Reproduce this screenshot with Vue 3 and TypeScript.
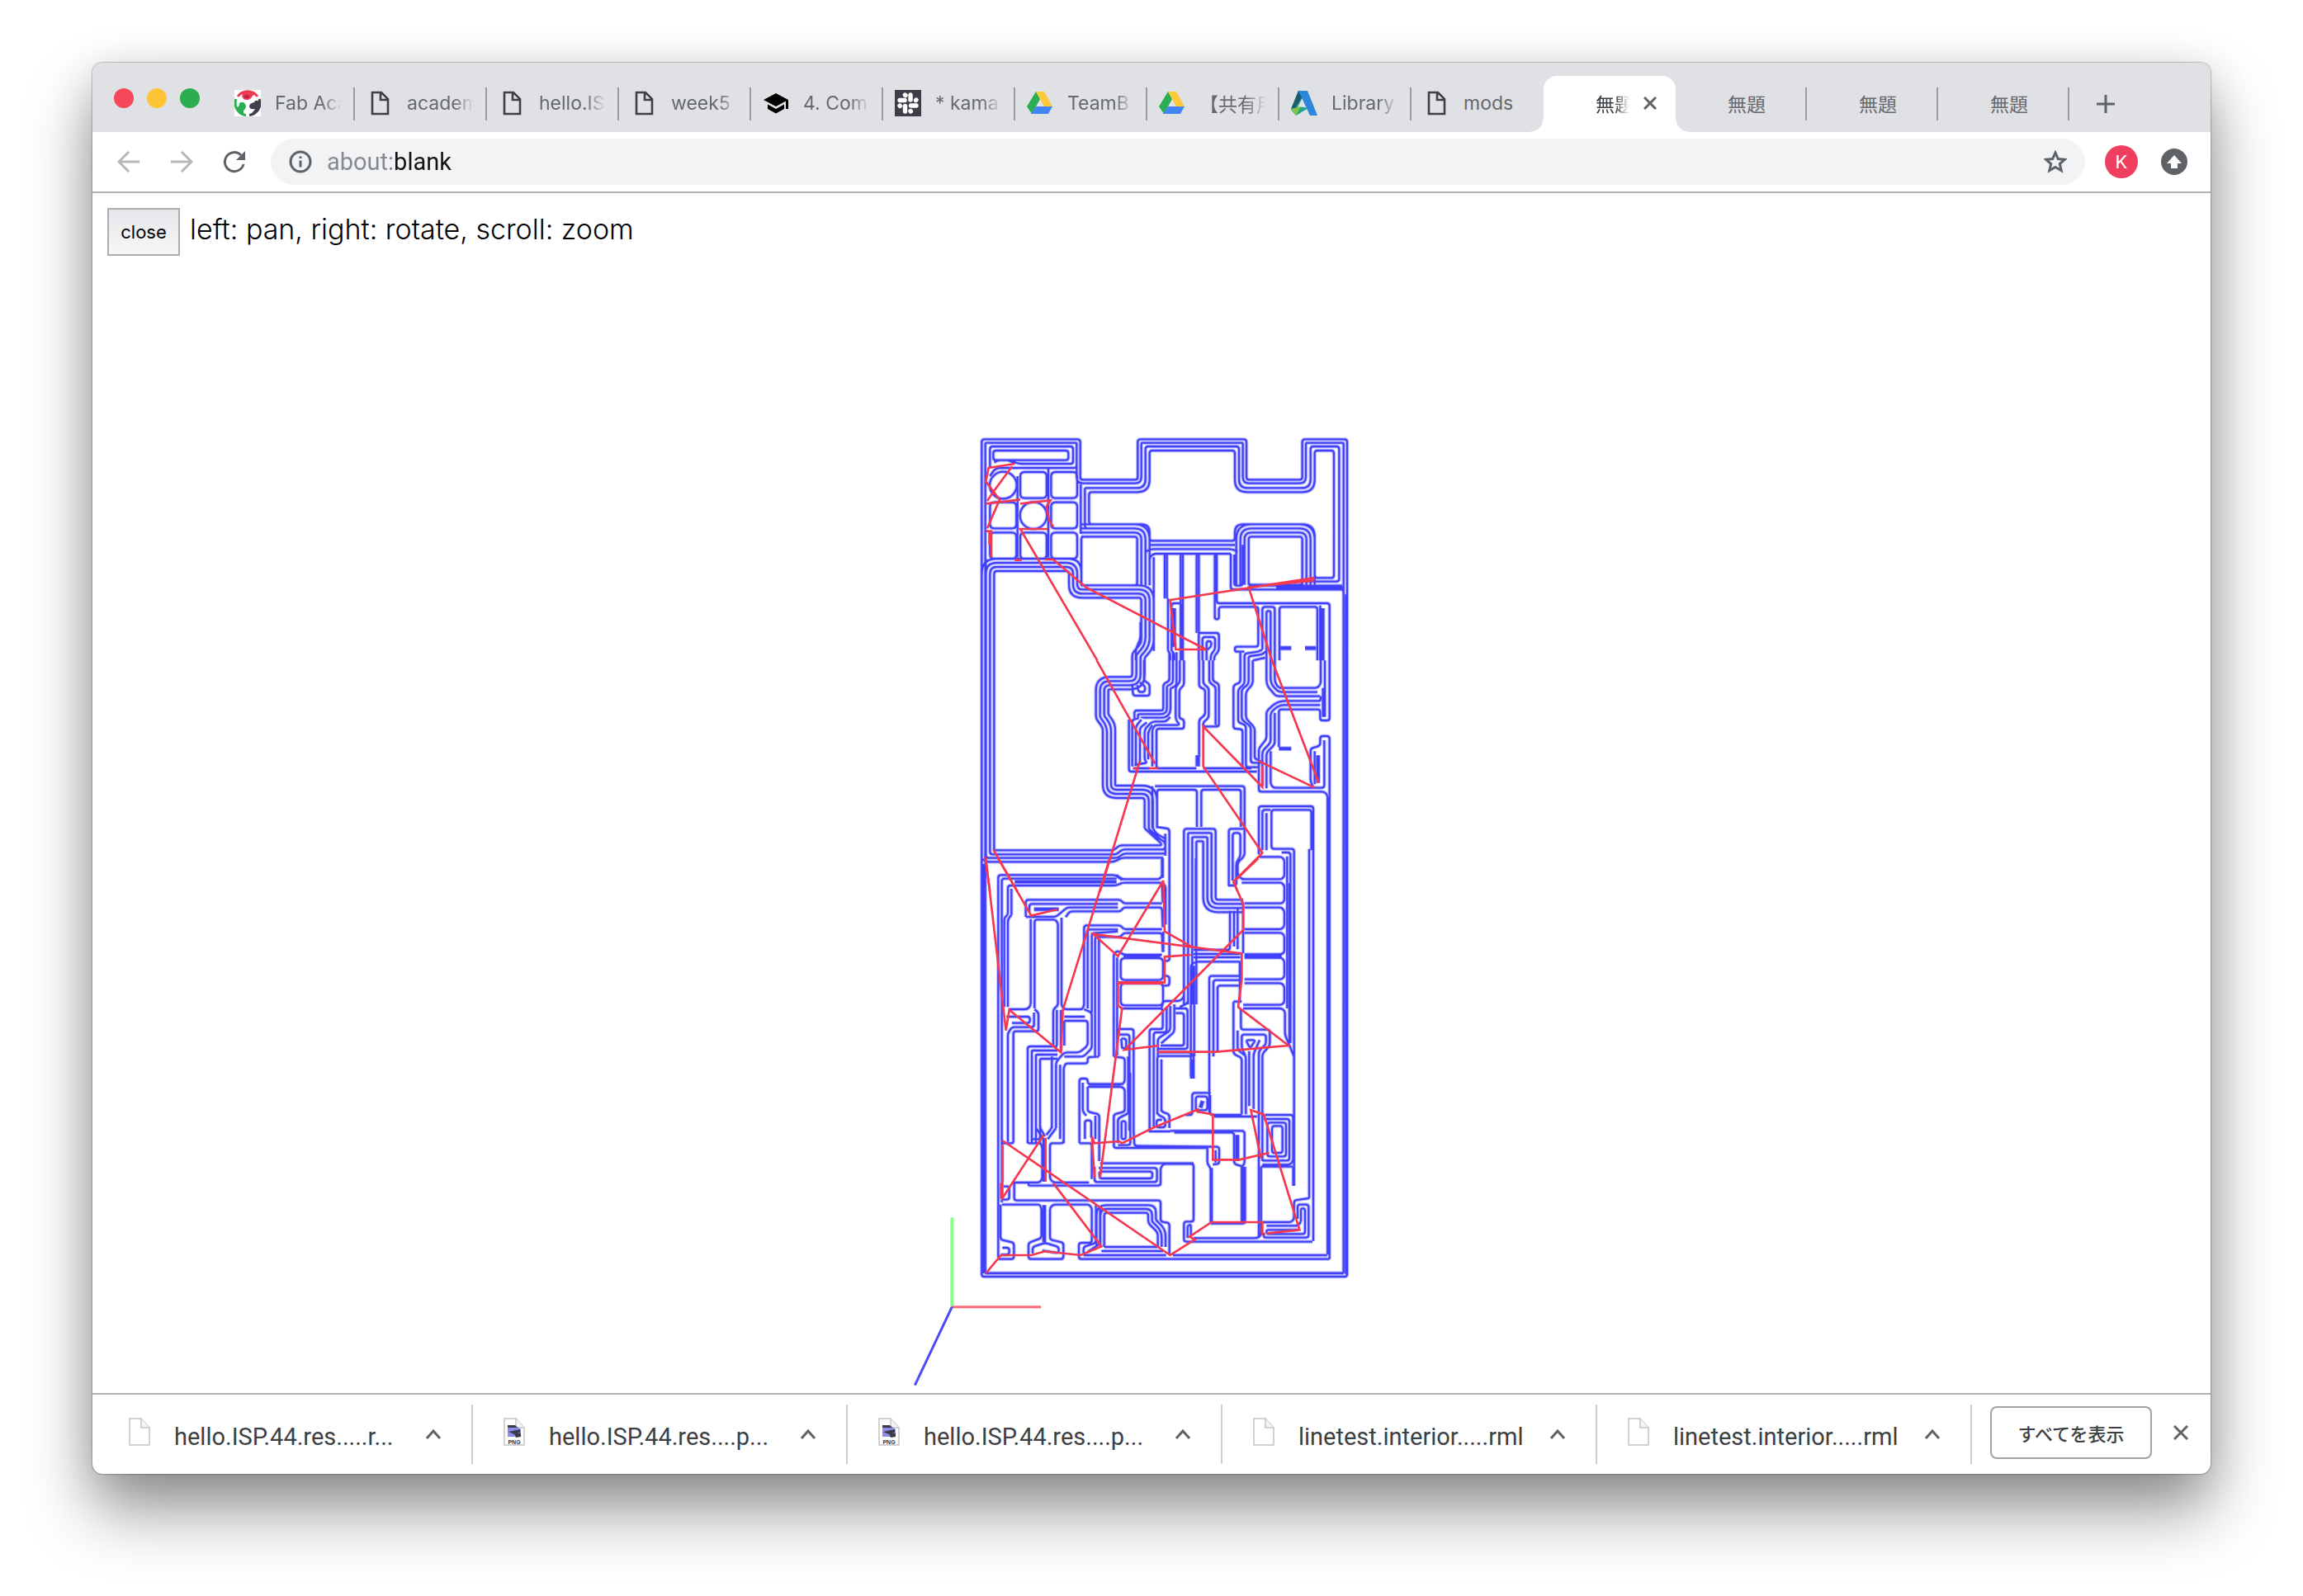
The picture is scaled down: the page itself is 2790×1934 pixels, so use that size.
<script setup lang="ts">
import { ref } from 'vue'

type Trace = [points: string, count?: number, step?: number, closed?: boolean]

interface Tab {
  title: string
  icon: string
}

interface Download {
  name: string
  png: boolean
}

const address = ref('about:blank')

const tabs: Tab[] = [
  { title: 'Fab Aca', icon: 'fab' },
  { title: 'academ', icon: 'page' },
  { title: 'hello.IS', icon: 'page' },
  { title: 'week5', icon: 'page' },
  { title: '4. Com', icon: 'cap' },
  { title: '* kama', icon: 'slack' },
  { title: 'TeamB', icon: 'drive' },
  { title: '【共有用', icon: 'drive' },
  { title: 'Library', icon: 'autodesk' },
  { title: 'mods', icon: 'page' },
  { title: '無題', icon: 'active' },
  { title: '無題', icon: 'none' },
  { title: '無題', icon: 'none' },
  { title: '無題', icon: 'none' },
]

const downloads: Download[] = [
  { name: 'hello.ISP.44.res.....r...', png: false },
  { name: 'hello.ISP.44.res....p...', png: true },
  { name: 'hello.ISP.44.res....p...', png: true },
  { name: 'linetest.interior.....rml', png: false },
  { name: 'linetest.interior.....rml', png: false },
]

/* Parallel tool paths: every point list is repeated `count` times, each pass
   shifted by `step` to the right of the travel direction. A third number on a
   point sets its corner radius. */
function shifted(points: number[][], d: number, closed: boolean): string {
  const n = points.length
  const out: { x: number; y: number; r: number }[] = []
  for (let i = 0; i < n; i++) {
    const p = points[i]
    const a = i > 0 ? points[i - 1] : closed ? points[n - 1] : null
    const b = i < n - 1 ? points[i + 1] : closed ? points[0] : null
    const u = a ? unit(a, p) : unit(p, b as number[])
    const v = b ? unit(p, b) : u
    const dot = 1 + u[0] * v[0] + u[1] * v[1]
    const k = dot < 0.2 ? 0 : d / dot
    const turn = u[0] * v[1] - u[1] * v[0]
    const r = Math.max(5, (p[2] ?? 10) - d * Math.sign(turn))
    out.push({ x: p[0] - (u[1] + v[1]) * k, y: p[1] + (u[0] + v[0]) * k, r })
  }
  let s = ''
  for (let i = 0; i < n; i++) {
    const p = out[i]
    const a = i > 0 ? out[i - 1] : closed ? out[n - 1] : null
    const b = i < n - 1 ? out[i + 1] : closed ? out[0] : null
    if (!a || !b) {
      s += `${i ? 'L' : 'M'}${p.x} ${p.y}`
      continue
    }
    const la = Math.hypot(p.x - a.x, p.y - a.y) || 1
    const lb = Math.hypot(p.x - b.x, p.y - b.y) || 1
    const r = Math.min(p.r, la / 2, lb / 2)
    s += `${i ? 'L' : 'M'}${p.x + ((a.x - p.x) * r) / la} ${p.y + ((a.y - p.y) * r) / la}`
    s += `Q${p.x} ${p.y} ${p.x + ((b.x - p.x) * r) / lb} ${p.y + ((b.y - p.y) * r) / lb}`
  }
  return closed ? s + 'Z' : s
}

function unit(a: number[], b: number[]): [number, number] {
  const l = Math.hypot(b[0] - a[0], b[1] - a[1]) || 1
  return [(b[0] - a[0]) / l, (b[1] - a[1]) / l]
}

function toPath(traces: Trace[], top: number): string {
  return traces
    .map(([text, count = 1, step = 15, closed = false]) => {
      const points = text.split(' ').map((p) => {
        const [x, y, r] = p.split(',').map(Number)
        return r === undefined ? [x, y + top] : [x, y + top, r]
      })
      return Array.from({ length: count }, (_, i) => shifted(points, i * step, closed)).join('')
    })
    .join('')
}

function box(x: number, y: number, w: number, h: number): Trace {
  return [`${x},${y},16 ${x + w},${y},16 ${x + w},${y + h},16 ${x},${y + h},16`, 1, 15, true]
}

const connector: Trace[] = [
  ['30,3080 30,36 388,36 388,183 597,183 597,36 992,36 992,183 1195,183 1195,36 1358,36 1358,3080', 2, 13, true],
  ['420,228 640,228,45 640,77 950,77 950,228,45 1240,228,45 1240,77 1310,77 1310,540 1240,540 1240,345,45 950,345,45 950,405 640,405 640,345,45 420,345', 1, 15, true],
  ['405,213 625,213,32 625,62 965,62 965,213,32 1225,213,32 1225,62 1329,62 1329,553 1210,553', 1],
  ['405,213 405,360 590,360', 1],
  ['45,470 45,1520'],
  ['60,140 60,62 362,62 362,125 165,125 140,115'],
  ['72,77 345,77 345,112 72,112', 1, 15, true],
  ['60,170,30 80,140,20 270,140 375,140 375,50'],
  ['75,120 90,112 130,112 150,125'],
  ['160,170 160,360 160,465'], ['272,140 272,465'],
  box(170, 155, 96, 95), box(282, 155, 95, 95),
  box(60, 265, 96, 95), box(282, 265, 95, 95),
  box(60, 375, 96, 95), box(170, 375, 96, 95), box(282, 375, 95, 95),
  ['390,190 390,380'],
  ['75,1530 75,515 347,515 347,612,50 610,612 610,775 577,815 577,900 445,900,50 445,1050 470,1085 470,1340,50 622,1340 622,1450', 4, -15],
  ['622,1450 682,1505 682,1512 530,1512 510,1530 75,1530'],
  ['637,1450 650,1475 697,1500 697,1527 540,1527 520,1545 60,1545 60,1500'],
  ['652,1450 665,1470 700,1490'], ['697,1542 545,1542 525,1558 45,1558 45,1500'],
  ['690,1557 540,1557 510,1572 45,1572 30,1560'],
  ['392,390 595,390 595,567', 4, -15],
  ['392,567 392,390 595,390 595,567', 1, 15, true],
  ['1195,565 1195,390 1000,390 1000,565', 4, 15],
  ['1000,390 1195,390 1195,565 1000,565', 1, 15, true],
  ['640,420 950,420'],
  ['625,445 645,435 940,435 960,445'],
  ['640,560 640,465 655,452 935,452'],
  ['655,805 655,465'],
  ['703,455 703,615', 2, 8], ['761,455 761,840', 2, 8], ['819,455 819,740', 2, 8],
  ['877,455 877,690 892,690 892,645 1035,645 1035,790 950,790 950,808 985,808'],
  ['884,455 884,632 1294,632 1294,1055'],
  ['935,452 935,582 1345,582 1345,3066'],
  ['1353,600 1353,3070'],
  ['948,455 948,568 978,568 978,420'],
  ['1000,568 1340,568'], ['1100,575 1345,575'],
  ['707,615 707,805'], ['720,805 720,632 755,632 755,840'], ['732,650 732,790', 2, 7],
  ['819,740 892,740 892,805 875,825 875,840'],
  ['832,840 832,755 878,755 878,800 862,820 862,840'],
  ['819,740 819,840'],
  ['847,840 847,770 864,770 864,790 850,800'],
  ['1050,800 1050,645 1095,645 1095,840'],
  ['1065,840 1065,660 1080,660 1080,840'],
  ['1112,840 1112,645 1250,645 1250,840'],
  ['1272,650 1272,840', 2, 7], ['1260,640 1260,840'],
  ['1115,792 1155,792', 2, 6], ['1205,792 1245,792', 2, 6],
  ['985,840 985,815 1035,808 1050,800'], ['1000,840 1000,825 1050,818 1065,805'], ['970,840 970,808'],
  ['1015,840 1060,830'],
  ['607,700 607,760 590,800 590,840'], ['707,805 715,815 715,840'], ['720,805 730,815 730,840'],
]

const middle: Trace[] = [
  ['577,85 580,128 640,128 640,85 620,75 620,0'],
  ['595,90 600,115 622,115 625,95 605,80'],
  ['585,210 585,182 690,182 690,85 712,75 712,-30', 3, 13],
  ['765,0 765,90 748,105 748,210 765,215 765,248 665,248 665,392 810,392'],
  ['750,0 750,80 735,95 735,215 750,235 660,235 650,250 650,385'],
  ['565,215 565,404 1030,404'],
  ['577,385 577,215 600,210'], ['590,380 590,240 610,215'], ['605,372 605,245 630,225'],
  ['585,380 630,372 622,360 622,250 650,222 700,222 715,205'],
  ['635,360 635,260 650,235'], ['580,392 640,392'],
  ['820,0 820,96 842,105 842,198 820,215 820,350'],
  ['835,0 835,85 855,100 855,208 835,225 835,240 892,240 892,85 870,75 870,0'],
  ['857,0 857,80 880,95 880,235'],
  ['819,345 819,385', 2, 8], ['812,345 812,380'], ['835,392 1010,392'],
  ['970,0 970,80 945,90 945,248 978,250 978,390'],
  ['985,0 985,85 962,105 962,225 990,235 990,388 1035,388'],
  ['1000,0 1000,85 975,105 975,215 1008,240 1008,372 1045,372'],
  ['1015,0 1015,85 990,115 990,210 1022,245 1022,358 1045,365'],
  ['1065,0 1065,90,20 1100,130 1260,130'], ['1080,0 1080,85,20 1110,115 1250,115'],
  ['1095,0 1095,80,20 1110,100 1250,100 1262,85 1262,0'],
  ['1277,0 1277,205', 1], ['1270,100 1270,205'],
  ['1294,0 1294,218 1260,218 1260,178 1110,178 1110,315'],
  ['1262,130 1262,147 1105,147,30 1065,185 1065,285 1037,320 1037,477 1275,477 1287,490 1287,2160'],
  ['1260,162 1110,162,20 1080,190 1080,298 1050,330 1050,455'],
  ['1095,190 1095,305 1065,335 1065,465'],
  ['1110,318 1155,318', 2, 5],
  ['1294,2176 1294,275 1260,275 1260,310 1225,320 1225,440 1235,462'],
  ['1080,330 1080,450 1090,463 1275,463 1275,290'],
  ['1240,330 1240,450'], ['1255,345 1255,445', 2, 6],
  ['1037,705 1037,530 1235,530 1235,2110'],
  ['1050,690 1050,543 1080,543'], ['1065,690 1065,555'],
  ['1228,690 1228,543 1083,543 1083,685 1165,685 1165,1910'],
  ['1220,1950 1220,685'],
  ['1152,1390 1152,698 1120,698'], ['1140,1265 1140,712'],
  ['1040,714 1120,714 1130,725 1130,785 1120,795 975,795 960,780 960,735 985,710 985,457 660,457'],
  ['667,605 667,470 812,470 812,605'], ['828,605 828,470 972,470 972,605'],
  ['650,457 650,610'],
  ['765,1250 765,612 880,612 880,870,10 980,870', 4, 15],
  ['928,818 928,612 985,612'], ['942,800 942,627 970,627 970,712 955,735 955,818 925,818'],
  ['685,720 685,785 675,795 540,795 520,780'],
  ['635,610 680,650'], ['667,605 712,612 712,1090'], ['697,630 697,710'],
]

const lower: Trace[] = [
  ['36,20 36,1500'],
  ['90,1450 90,60 515,60 540,78'], ['103,1250 103,73 520,73'],
  ['150,82 520,82', 2, 5],
  ['112,540 112,215 125,205 125,98 520,98 540,88 685,88 688,160'],
  ['138,205 138,110', 1], ['125,540 125,220 138,205'],
  ['190,212 190,150 535,150 545,163 685,163'], ['203,195 203,165 525,165'],
  ['190,212 300,212 340,178 525,178'], ['335,213 350,192 535,192 545,178 685,178 688,250'],
  ['220,182 310,182', 2, 5],
  ['208,220 208,535 195,548 130,548'], ['222,545 222,222 298,222 307,235 307,535 290,548 290,680'],
  ['320,215 320,535 330,548 395,548 402,535 402,243 535,243 545,257 685,257'],
  ['415,545 415,258 525,258'], ['430,560 430,272 525,265'], ['442,720 442,285 535,285 545,271 685,271 688,340'],
  ['456,720 456,290'], ['402,548 430,560 430,690 400,720 330,720'],
  ['120,575 205,575 205,598 140,598'], ['222,548 236,560 236,628 145,628 145,1030'],
  ['220,560 220,613 140,613 125,635 125,1030'],
  ['197,1035 197,683 305,683', 4, 15],
  ['303,550 303,680'], ['318,550 318,700'],
  ['330,590 415,590 415,680 385,705 330,705 300,740 300,980'],
  ['330,590 330,680'], ['330,575 405,575'],
  ['456,720 415,722 415,745 335,745 328,760 328,1035'], ['285,720 285,980'], ['315,750 315,1020'],
  ['688,0 688,70'], ['688,90 698,100 698,240'],
  ['510,720 510,345 525,335 545,350 685,350'], ['690,265 690,340'],
  ['522,715 522,360'],
  ['545,355 680,355'],
  box(535, 362, 154, 80), box(535, 454, 154, 80),
  ['712,370 690,375'], ['690,425 712,428 712,462 690,462'],
  ['765,300 765,505 750,518 690,518 683,545'], ['780,320 780,525 750,540'],
  ['795,0 795,340', 1], ['808,0 808,330'],
  ['790,790 790,385 810,375 970,375'], ['800,347 970,347', 2, 12],
  ['802,720 802,390'],
  ['857,930 857,427 965,427'], ['872,720 872,442 965,442'], ['887,700 887,462 965,462'],
  ['535,545 688,545 688,620 640,620 640,990'], ['702,540 702,632 655,632 655,970'],
  ['715,535 715,625 670,655 670,720'], ['730,530 730,630 682,672'],
  ['735,562 765,562 765,680 680,680'], ['670,692 778,692 778,545 730,545'], ['670,705 790,705 800,720 800,800'],
  ['668,930 668,718 790,718'], ['683,920 683,730'],
  ['932,190 932,332 800,332'], ['947,190 947,320'], ['960,180 960,330'],
  ['975,150 980,170 980,345'],
  ['945,520 945,710 975,725 975,930'], ['945,520 975,520'], ['960,625 960,695 985,715'],
  ['972,545 972,622 1077,622 1077,680 1050,710 1050,930'],
  ['990,930 990,720 975,690 975,640 1063,640 1063,675 1037,700 1037,950'],
  ['990,660 1025,660 1005,690', 1, 15, true], ['1002,900 1002,700'], ['1018,910 1018,710 1040,660'],
  ['975,75 1120,75'], ['975,88 1120,88 1130,98 1130,155 1120,163 985,163'],
  ['985,178 1120,178 1130,190 1130,245 1120,257 985,257'],
  ['985,270 1120,270 1130,280 1130,340 1120,348 985,348'],
  ['985,355 1120,355'],
  ['985,361 1120,361 1130,372 1130,430 1120,439 985,439'],
  ['985,453 1120,453 1130,465 1130,522 1120,532 980,532'],
  ['980,545 1120,545 1132,555 1132,640 1165,720'],
  ['1148,90 1148,670'], ['968,375 968,520'],
  ['525,635 525,620 582,620 582,1000'], ['525,640 567,640 567,990'], ['537,655 555,655 555,690 540,690 537,655'],
  ['510,720 550,725 550,810 540,822 420,822'], ['562,720 562,930'],
  ['797,730 797,800', 2, 6],
]

const bottom: Trace[] = [
  ['385,255 385,20 415,20 415,40 545,40'], ['397,35 397,140 410,155'],
  ['415,50 540,50 550,60 550,140 510,150 510,272 850,272'], ['415,50 415,140 457,150 457,320'],
  ['405,240 405,172 428,172 428,235'], ['443,155 443,240'], ['385,255 430,255 430,385'],
  ['525,255 525,165 565,145'], ['538,175 553,175 553,240 538,240', 1, 15, true],
  ['582,210 585,265 893,268 893,330 870,332'], ['570,0 570,262 525,262'],
  ['197,240 197,255 245,255 250,270 250,385 240,398 140,398'], ['242,180 242,200 260,230'], ['227,200 255,240'], ['212,240 245,240'],
  ['328,240 326,255 278,255 278,385 290,398 420,398'], ['285,180 285,200 265,225'], ['300,200 270,240'],
  ['145,240 145,255 100,255'], ['260,240 260,395', 2, 6], ['105,265 105,395'],
  ['200,398 200,409 680,409 680,345 690,330 800,330 800,540 765,540 765,613 1232,613'],
  ['440,340 440,396 667,396 667,345 455,345'], ['458,358 650,358 650,383 458,383 458,358'], ['460,328 800,328'],
  ['110,412 130,412 130,460 100,460'], ['148,400 148,463 680,463 680,540 712,545 712,660'],
  ['103,478 240,478 247,490 247,600 200,617 200,676 327,676 327,617 278,605 278,490 290,478 420,478 430,490 430,617 383,617 383,676 1294,676'],
  ['98,478 98,605 147,617 147,676 90,676'], ['105,635 130,635 130,660 100,660'],
  ['215,655 215,632 260,617 310,632 310,655 250,645'], ['260,480 260,615', 2, 6],
  ['445,480 445,617 400,632 400,655'], ['460,490 460,620 415,650'],
  ['475,632 475,508 635,508 635,545 670,580 670,632', 3, -14],
  ['475,632 670,632'], ['465,647 690,647'],
  ['400,662 700,662'], ['725,662 1285,662'],
  ['778,600 778,555 790,550 790,590'], ['800,600 1030,600 1045,590 1045,340'],
  ['640,210 640,212 715,212'], ['712,200 712,150 683,140 683,0'],
  ['655,180 655,195'], ['668,130 668,150 697,165 697,197 665,197 665,170 685,170'],
  ['715,210 985,210 985,330 975,340'], ['730,216 947,216 947,330 980,340'],
  ['862,547 862,345 850,330 850,270'], ['862,547 987,547 987,340'], ['975,340 975,540'], ['980,340 980,545'],
  ['866,345 866,540'],
  ['962,225 962,320', 2, 7], ['880,280 880,325'],
  ['770,152 795,152 795,72 862,72'], ['808,135 808,85 850,85 850,135', 1, 15, true],
  ['860,80 860,152 975,152'], ['822,125 830,100', 2, 6], ['875,158 1030,158'],
  ['1037,150 1037,600'], ['1050,150 1050,320'],
  ['1060,152 1162,152 1162,320 1150,333 1050,333'], ['1055,167 1148,167 1148,318 1050,318'],
  ['1068,180 1136,180 1136,303 1068,303', 1, 15, true], ['1085,192 1123,192 1123,290 1085,290', 1, 15, true],
  ['1045,340 1160,340', 1], ['1162,340 1162,410'],
  ['1220,445 1220,455 1165,463 1165,530 1155,542 1050,542'],
  ['1178,530 1178,478 1218,478 1218,598 1055,598 1055,580'],
  ['1190,540 1190,492 1205,492 1205,585 1065,585 1065,570 1180,570'], ['1065,555 1180,555 1190,540'],
  ['42,728 1345,728'], ['36,0 36,728'],
]

const cutPath =
  toPath(connector, 0) + toPath(middle, 840) + toPath(lower, 1560) + toPath(bottom, 2340) +
  'M59 203a49 49 0 1 0 98 0a49 49 0 1 0 -98 0ZM169 313a49 49 0 1 0 98 0a49 49 0 1 0 -98 0Z'

const jumps = [
  {
    shift: 0,
    path: 'M150 125L55 140L45 190L95 255L50 360M140 135L70 230L50 260M45 270L170 255M45 370L65 370V465M58 370V420M170 270L280 258L265 280L275 330L290 355M270 362H170L450 840M150 475H175M260 473H290L410 575L845 800H735L715 620L1235 540V550L1000 574L1085 840',
  },
  {
    shift: 840,
    path: 'M448 0L660 375M635 392H672M580 392H595M1085 0L1255 445M1240 462L1035 365M1050 385V460L835 240V385L1050 700L945 805L960 840M605 365L460 840M72 688L160 840M42 715L60 840M835 250V380',
  },
  {
    shift: 1560,
    path: 'M495 0L325 550L318 705L130 550L118 625L45 0M95 430L118 625M90 0L210 208L305 185M690 80L525 355L435 275L975 345V440L962 540L1145 680L880 703H670M690 80L695 265L800 325M1035 0L945 85L980 165V260L550 695L675 680M790 350L695 357V450H525V535L540 545L460 1160M530 454H690',
  },
  {
    shift: 2340,
    path: 'M440 380L430 230L440 255L530 248L540 255L650 200L820 130M810 140L870 150V315H965L1075 290M1045 310L1008 135L1055 150L1185 570L1065 583M105 245L715 662L805 605L785 595L865 542H1050V590M45 728L100 662H210L260 648L390 662L465 630L290 400M262 395V235M255 225L105 455V260M100 400V455',
  },
]
</script>

<template>
  <div class="desktop">
    <main class="window">
      <header class="tabstrip">
        <div class="lights">
          <button class="light red" aria-label="Close window"></button>
          <button class="light yellow" aria-label="Minimise window"></button>
          <button class="light green" aria-label="Zoom window"></button>
        </div>
        <nav class="tabs">
          <button v-for="(tab, i) in tabs" :key="i" class="tab" :class="{ active: i === 10, before: i === 9 }">
            <span class="favicon">
              <svg v-if="tab.icon === 'fab'" viewBox="0 0 32 32">
                <rect width="32" height="32" fill="#fff" />
                <g stroke-width="3" fill="none">
                  <path d="M4 8A14.500 14.500 0 0 1 28 8" stroke="#ee3a55" />
                  <path d="M2 11A14.500 14.500 0 0 0 14 30.500" stroke="#2bae52" />
                  <path d="M30 11A14.500 14.500 0 0 1 18 30.500" stroke="#41414d" />
                </g>
                <path d="M6 5Q16 -2 26 5L22 7Q20 12 15 12Q10 12 9 7Q12 5 6 5Z" fill="#ee3a55" />
                <path d="M12 8A3 2 0 1 0 18 8A3 2 0 1 0 12 8Z" fill="#b92641" />
                <path d="M2 20Q6 22 6 16Q10 13 13 17Q15 21 12 24Q10 25 12 30Q4 27 2 20Z" fill="#2bae52" />
                <path d="M30 14Q25 11 24 15Q18 16 18 20Q19 24 24 23Q27 22 19 30Q31 26 30 14Z" fill="#41414d" />
              </svg>
              <svg v-else-if="tab.icon === 'page'" viewBox="0 0 32 32">
                <path d="M7 3H18L26 11V29H7ZM17 3V12H26" fill="none" stroke="#3f3f48" stroke-width="2.6" />
              </svg>
              <svg v-else-if="tab.icon === 'cap'" viewBox="0 0 32 32">
                <path d="M16 4L1 12L16 20L28 13.500V23H31V12ZM6 17.500V23L16 28.500L26 23V17.500L16 23Z" fill="#000" />
              </svg>
              <svg v-else-if="tab.icon === 'slack'" viewBox="0 0 32 32">
                <rect width="32" height="32" fill="#3f3b48" />
                <path d="M19 6V12M12.500 19.500V26M6 12.500H12M19.500 19H26M12.400 6L13 6.600M26 12L25.500 12.600M19 25.500L19.400 26M6 19L6.400 19.500" stroke="#fff" stroke-width="5.400" stroke-linecap="round" />
              </svg>
              <svg v-else-if="tab.icon === 'drive'" viewBox="0 0 32 32">
                <path d="M11 2L16 11L6 29L0 20Z" fill="#2bae52" />
                <path d="M11 2H21L31 20H21Z" fill="#ffc937" />
                <path d="M11 20H31L26 29H5Z" fill="#4285f4" />
              </svg>
              <svg v-else-if="tab.icon === 'autodesk'" viewBox="0 0 32 32">
                <path d="M9 1L15 9L11 20L21 22L6 31L0 24Z" fill="#1fa58c" />
                <path d="M9 1L14 8L5 22L0 23Z" fill="#1c5b70" />
                <path d="M14 9L19 20L8 21Z" fill="#e0e1e5" />
                <path d="M9 1H20L32 31H23Z" fill="#2e86dd" />
                <path d="M0 23L12 20L6 31Z" fill="#86c540" />
              </svg>
            </span>
            <span class="title">{{ tab.title }}</span>
            <svg v-if="tab.icon === 'active'" class="shut" viewBox="0 0 16 16">
              <path d="M1 1L15 15M15 1L1 15" />
            </svg>
          </button>
        </nav>
        <button class="plus" aria-label="New tab">
          <svg viewBox="0 0 24 24"><path d="M12 1V23M1 12H23" /></svg>
        </button>
      </header>

      <div class="toolbar">
        <button class="nav faint" aria-label="Back">
          <svg viewBox="0 0 28 28"><path d="M27 14H3M14 2L2 14L14 26" /></svg>
        </button>
        <button class="nav faint" aria-label="Forward">
          <svg viewBox="0 0 28 28"><path d="M1 14H25M14 2L26 14L14 26" /></svg>
        </button>
        <button class="nav" aria-label="Reload">
          <svg viewBox="0 0 28 28">
            <path d="M25 17A11.500 11.500 0 1 1 22 6" />
            <path d="M27 1V12H16Z" class="solid" />
          </svg>
        </button>
        <label class="omnibox">
          <svg class="info" viewBox="0 0 28 28">
            <circle cx="14" cy="14" r="12" />
            <path d="M14 12.500V20.500M14 7.500V10" />
          </svg>
          <input v-model="address" aria-label="Address" spellcheck="false" />
          <svg class="star" viewBox="0 0 28 28">
            <path d="M14 3L17.300 10.500L25.500 11.200L19.300 16.600L21.200 24.700L14 20.400L6.800 24.700L8.700 16.600L2.500 11.200L10.700 10.500Z" />
          </svg>
        </label>
        <button class="avatar">K</button>
        <button class="update" aria-label="Update">
          <svg viewBox="0 0 32 32"><path d="M16 8L25 18H20V24H12V18H7Z" /></svg>
        </button>
      </div>

      <section class="content">
        <div class="hint">
          <button class="close">close</button>
          <span>left: pan, right: rotate, scroll: zoom</span>
        </div>
        <svg class="scene" viewBox="-238 -31 1770 3534">
          <path :d="cutPath" class="halo" />
          <path :d="cutPath" class="cut" />
          <g class="jump">
            <path v-for="j in jumps" :key="j.shift" :d="j.path" :transform="`translate(0 ${j.shift})`" />
          </g>
          <path d="M-78 3190V2865" class="axis y" />
          <path d="M-78 3190H245" class="axis x" />
          <path d="M-78 3190L-213 3475" class="axis z" />
        </svg>
      </section>

      <footer class="shelf">
        <button v-for="(d, i) in downloads" :key="i" class="download">
          <svg class="file" viewBox="0 0 26 34">
            <path d="M1 1H15L25 12V33H1Z" fill="#fff" stroke="#c4c4c8" stroke-width="1.500" />
            <path d="M15 1V12H25" fill="#f4f4f6" stroke="#c4c4c8" stroke-width="1.500" />
            <g v-if="d.png">
              <path d="M5 10H15L21 14V23H5Z" fill="#8b8be8" />
              <path d="M5 9H14L17 12H5ZM6 17L20 14V18L13 20ZM13 19H21V23L15 24Z" fill="#3b3b48" />
              <text x="13" y="32" text-anchor="middle">PNG</text>
            </g>
          </svg>
          <span class="name">{{ d.name }}</span>
          <svg class="chevron" viewBox="0 0 20 14"><path d="M2 12L10 3L18 12" /></svg>
        </button>
        <button class="all">すべてを表示</button>
        <button class="dismiss" aria-label="Close downloads">
          <svg viewBox="0 0 18 18"><path d="M1 1L17 17M17 1L1 17" /></svg>
        </button>
      </footer>
    </main>
  </div>
</template>

<style>
body {
  background: #fff;
}
</style>

<style scoped>
.desktop {
  box-sizing: border-box;
  min-height: 100vh;
  padding: 76px 112px 148px;
  display: flex;
  overflow: hidden;
  font-family: Inter, "Noto Sans CJK JP", sans-serif;
}
.window {
  flex: 1;
  min-width: 0;
  display: flex;
  flex-direction: column;
  background: #fff;
  border-radius: 12px;
  overflow: hidden;
  box-shadow: 0 0 2px rgba(0, 0, 0, 0.7), 0 44px 80px rgba(0, 0, 0, 0.42), 0 8px 50px rgba(0, 0, 0, 0.12);
}
button {
  border: 0;
  padding: 0;
  background: none;
  font: inherit;
  color: inherit;
}
svg {
  display: block;
  fill: none;
}
.tabstrip {
  height: 84px;
  display: flex;
  align-items: flex-end;
  background: #e0e1e5;
}
.lights {
  display: flex;
  gap: 16px;
  padding: 0 28px 29px 26px;
}
.light {
  width: 24px;
  height: 24px;
  border-radius: 50%;
}
.red { background: #f7485a; }
.yellow { background: #fdc435; }
.green { background: #2bae4f; }
.tabs {
  display: flex;
  height: 68px;
}
.tab {
  position: relative;
  box-sizing: border-box;
  width: 160px;
  padding: 0 16px 2px 14px;
  display: flex;
  align-items: center;
  gap: 17px;
  font-size: 23px;
  color: #66696e;
}
.tab:nth-child(n + 12) {
  width: 159px;
}
.tab::after {
  content: "";
  position: absolute;
  right: 0;
  top: 14px;
  width: 2px;
  height: 40px;
  background: #999ba0;
}
.tab.before::after,
.tab.active::after {
  display: none;
}
.favicon,
.favicon svg {
  width: 32px;
  height: 32px;
  flex: none;
}
.title {
  flex: 1;
  min-width: 0;
  overflow: hidden;
  white-space: nowrap;
  text-align: left;
  mask-image: linear-gradient(90deg, #000 70%, transparent);
}
.tab.before .title,
.tab:nth-child(n + 12) .title {
  mask-image: none;
}
.tab.active {
  background: #fff;
  border-radius: 16px 16px 0 0;
  color: #3c4043;
  padding-right: 23px;
}
.tab.active .title {
  mask-image: linear-gradient(90deg, #000 60%, transparent);
}
.tab.active::before {
  content: "";
  position: absolute;
  left: -16px;
  right: -16px;
  bottom: 0;
  height: 16px;
  background:
    radial-gradient(circle at 0 0, transparent 15px, #fff 16px) left / 16px 16px no-repeat,
    radial-gradient(circle at 100% 0, transparent 15px, #fff 16px) right / 16px 16px no-repeat;
}
.shut {
  width: 16px;
  height: 16px;
  stroke: #5f6368;
  stroke-width: 3;
}
.plus {
  padding: 0 32px 22px;
}
.plus svg {
  width: 24px;
  height: 24px;
  stroke: #5f6368;
  stroke-width: 3;
}
.toolbar {
  height: 72px;
  display: flex;
  align-items: center;
  padding: 0 28px 0 30px;
  border-bottom: 2px solid #b2b2b4;
}
.nav {
  margin-right: 36px;
}
.nav svg {
  width: 28px;
  height: 28px;
  stroke: #5f6368;
  stroke-width: 3;
}
.nav.faint svg {
  stroke: #b5b7ba;
}
.nav .solid {
  fill: #5f6368;
  stroke: none;
}
.omnibox {
  flex: 1;
  margin-left: -6px;
  height: 56px;
  display: flex;
  align-items: center;
  padding: 0 22px;
  border-radius: 28px;
  background: #f1f3f4;
}
.info,
.star {
  width: 28px;
  height: 28px;
  stroke: #5f6368;
  stroke-width: 3;
}
.omnibox input {
  flex: 1;
  min-width: 0;
  margin: 0 18px;
  padding: 0;
  border: 0;
  outline: 0;
  font: 29px/40px Roboto, sans-serif;
  background: linear-gradient(90deg, #85888c 81px, #111 81px);
  background-clip: text;
  -webkit-text-fill-color: transparent;
}
.avatar {
  width: 40px;
  height: 40px;
  margin: 0 28px 0 24px;
  border-radius: 50%;
  background: #ee3f60;
  color: #fff;
  font-size: 22px;
}
.update {
  width: 32px;
  height: 32px;
  border-radius: 50%;
  background: #5f6368;
}
.update path {
  fill: #fff;
}
.content {
  flex: 1;
  display: flex;
  flex-direction: column;
  align-items: center;
}
.hint {
  align-self: stretch;
  display: flex;
  gap: 12px;
  padding: 18px;
  font-size: 34px;
  line-height: 52px;
  font-weight: 300;
  color: #000;
}
.close {
  width: 88px;
  height: 58px;
  border: 2px solid #adadb1;
  background: linear-gradient(#e6e7ea, #f7f7f9);
  font-size: 22px;
  font-weight: 400;
}
.scene {
  width: 590px;
  height: 1178px;
  margin-top: auto;
}
.halo {
  stroke: #c6c6ff;
  stroke-width: 14;
}
.cut {
  stroke: #4040fa;
  stroke-width: 7;
}
.jump {
  stroke: #f5384f;
  stroke-width: 8;
}
.axis.y {
  stroke: #88ff88;
  stroke-width: 12;
}
.axis.x {
  stroke: #fb6a78;
  stroke-width: 9;
}
.axis.z {
  stroke: #4a4af8;
  stroke-width: 9;
}
.shelf {
  height: 96px;
  display: flex;
  align-items: center;
  border-top: 2px solid #b0b0b0;
}
.download {
  box-sizing: border-box;
  flex: 0 1 454px;
  height: 72px;
  padding: 0 36px 0 37px;
  display: flex;
  align-items: center;
  border-right: 2px solid #cdcdcd;
  font-size: 29px;
  color: #3c4043;
}
.download:first-child {
  flex-basis: 461px;
  padding-left: 44px;
}
.file {
  width: 26px;
  height: 34px;
  margin-bottom: 6px;
}
.file text {
  font: 700 7px "Liberation Sans", sans-serif;
  fill: #333;
}
.name {
  flex: 1;
  padding: 6px 0 0 29px;
  text-align: left;
  white-space: nowrap;
  font-family: Roboto, sans-serif;
}
.chevron {
  width: 20px;
  height: 14px;
  stroke: #5f6368;
  stroke-width: 3;
}
.all {
  box-sizing: border-box;
  width: 196px;
  height: 64px;
  margin: 0 26px 4px 22px;
  border: 2px solid #a0a2a5;
  border-radius: 8px;
  font-size: 22px;
  font-weight: 500;
  color: #3c4043;
}
.dismiss {
  margin-bottom: 4px;
}
.dismiss svg {
  width: 18px;
  height: 18px;
  stroke: #5f6368;
  stroke-width: 3;
}
</style>
